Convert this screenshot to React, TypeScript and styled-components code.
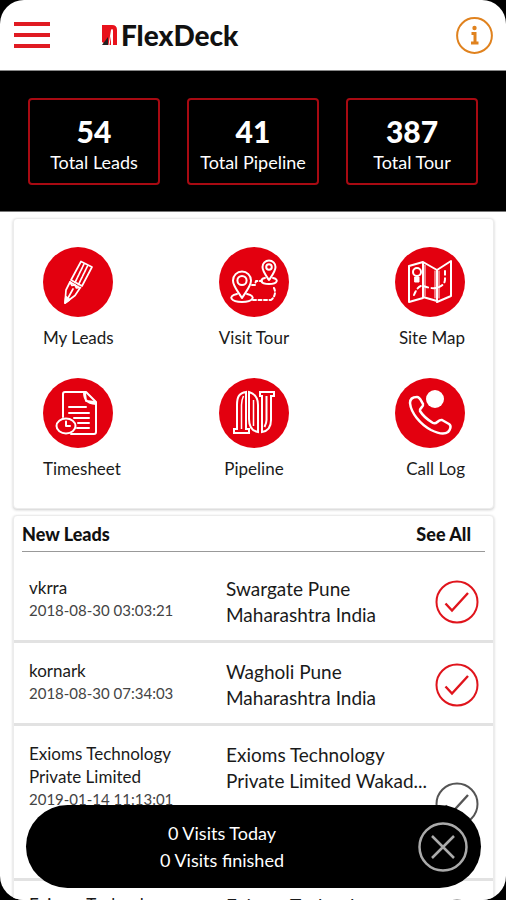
import React from "react";
import styled, { createGlobalStyle } from "styled-components";

const RED = "#e3000f";

const GlobalStyle = createGlobalStyle`
  * { box-sizing: border-box; }
  body {
    margin: 0;
    background: #000;
    color: #1a1a1a;
    font-family: Lato, "Liberation Sans", sans-serif;
    font-size: 18px;
  }
  button { font: inherit; color: inherit; background: none; border: 0; padding: 0; cursor: pointer; }
  h1, h2, p, ul, dl, dd { margin: 0; padding: 0; }
`;

const Screen = styled.div`
  position: relative;
  height: 100vh;
  overflow: hidden;
  background: #fff;
  border-radius: 24px;
`;

const Header = styled.header`
  display: flex;
  align-items: center;
  height: 71px;
  padding: 0 13px 0 14px;
  border-bottom: 1px solid #888;
`;

const MenuButton = styled.button`
  display: grid;
  gap: 7px;
  width: 36px;
`;

const MenuBar = styled.span`
  height: 4px;
  background: #e01b22;
`;

const Brand = styled.h1`
  display: flex;
  align-items: center;
  gap: 4px;
  flex: 1;
  margin-left: 52px;
  font-size: 28px;
  line-height: 32px;
  font-weight: 900;
  color: #111;
`;

const IconButton = styled.button`
  display: flex;
  flex: none;
`;

const Stats = styled.dl`
  display: grid;
  grid-template-columns: repeat(3, 1fr);
  gap: 27px;
  padding: 27px 28px 26px;
  background: #000;
  border-bottom: 1px solid #777;
`;

const Stat = styled.div`
  display: flex;
  flex-direction: column-reverse;
  justify-content: flex-start;
  align-items: center;
  height: 87px;
  padding: 12px 0 8px;
  border: 2px solid #a80a12;
  border-radius: 4px;
  color: #fff;
`;

const StatLabel = styled.dt`
  line-height: 26px;
  white-space: nowrap;
`;

const StatValue = styled.dd`
  font-size: 30px;
  line-height: 36px;
  font-weight: 900;
`;

const Card = styled.section`
  margin: 6px 12px 0 13px;
  background: #fff;
  border: 1px solid #ececec;
  border-radius: 4px;
  box-shadow: 0 1px 3px rgba(0, 0, 0, 0.2);
`;

const Tiles = styled.nav`
  display: grid;
  grid-template-columns: repeat(3, 1fr);
  row-gap: 28px;
  padding: 28px 28px 27px 29px;
`;

const Tile = styled.button<{ $side: "start" | "center" | "end" }>`
  display: flex;
  flex-direction: column;
  align-items: ${(p) => p.$side};
  gap: 9px;
  font-size: 17px;
  line-height: 24px;
`;

const Disc = styled.span`
  display: flex;
  align-items: center;
  justify-content: center;
  width: 70px;
  height: 70px;
  border-radius: 50%;
  background: ${RED};
`;

const ListHeader = styled.div`
  display: flex;
  justify-content: space-between;
  align-items: center;
  height: 36px;
  margin: 0 8px;
  padding-right: 14px;
  border-bottom: 1px solid #999;
  color: #111;
`;

const ListTitle = styled.h2`
  font-size: 18px;
  line-height: 24px;
  font-weight: 900;
`;

const SeeAll = styled.a`
  font-size: 18px;
  line-height: 24px;
  font-weight: 900;
  color: inherit;
  text-decoration: none;
`;

const LeadList = styled.ul`
  list-style: none;
`;

const Lead = styled.li<{ $tall?: boolean }>`
  display: grid;
  grid-template-columns: 180px minmax(0, 1fr) 44px;
  column-gap: 17px;
  min-height: ${(p) => (p.$tall ? 155 : 83)}px;
  padding: 16px 14px 12px 15px;
  border-bottom: 3px solid #e2e2e2;

  &:first-child { padding-top: 24px; min-height: 90px; }
  &:last-child { padding-top: 12px; }
`;

const LeadName = styled.p`
  width: 160px;
  font-size: 17px;
  line-height: 23px;
`;

const LeadDate = styled.time`
  display: block;
  font-size: 15px;
  line-height: 22px;
  color: #444;
`;

const LeadPlace = styled.p`
  font-size: 19px;
  line-height: 26px;
  white-space: nowrap;
`;

const CheckButton = styled.button`
  display: flex;
  align-self: center;
`;

const VisitsBar = styled.aside`
  position: absolute;
  left: 26px;
  right: 25px;
  bottom: 12px;
  display: flex;
  align-items: center;
  min-height: 83px;
  padding-right: 13px;
  border-radius: 42px;
  background: #000;
  color: #fff;
`;

const VisitsText = styled.p`
  flex: 1;
  line-height: 27px;
  text-align: center;
`;

const BrandMark = () => (
  <svg width="15" height="20" viewBox="0 0 15 20" aria-hidden="true">
    <path d="M0 0h10q5 0 5 5v15h-4V6q0-2-1-2T9 6v14H5L0 17z" fill="#e8121c" />
    <path d="M0 20l6-8v8z" fill="#222" />
    <path d="M7 20L9.500 5" stroke="#fff" strokeWidth="1" />
  </svg>
);

const InfoIcon = () => (
  <svg width="37" height="37" viewBox="0 0 37 37" fill="none" stroke="#e0821e" aria-hidden="true">
    <circle cx="18.500" cy="18.500" r="17.400" strokeWidth="2" />
    <circle cx="18.500" cy="11" r="2.200" fill="#e0821e" stroke="none" />
    <path d="M15.500 16.500h3.500v9M15 26h7.500" strokeWidth="3" />
  </svg>
);

const art = {
  width: 50,
  height: 50,
  viewBox: "0 0 50 50",
  fill: "none",
  stroke: "#fff",
  strokeWidth: 2,
  strokeLinejoin: "round" as const,
  strokeLinecap: "round" as const,
  "aria-hidden": true,
};

const PencilArt = () => (
  <svg {...art} strokeWidth={1.7}>
    <path d="M18 23L28 4.500l11 5.500L29 29z" />
    <path d="M31 7L22 25.500M34.500 9L25.500 27.500" strokeDasharray="3 1" />
    <path d="M17 25l-4 8-1 13 10-7.500 5-7.500z" />
    <path d="M17 25l2 3.500 3-.5 1.500 3 4-.5M20 32l-5 9M13 40l3.500 2.500" />
    <path d="M12 46l.8-6 3.500 3z" fill="#fff" />
  </svg>
);

const RouteArt = () => (
  <svg {...art}>
    <path d="M13 41C8 33 4 29 4 23.500a9 9 0 0 1 18 0C22 29 18 33 13 41z" />
    <circle cx="13" cy="23.500" r="4.600" />
    <path d="M8 37c-10 2-6 8 5 8s15-6 5-8" />
    <path d="M40 23c-4-6-6.500-9-6.500-13a6.500 6.500 0 0 1 13 0c0 4-2.500 7-6.500 13z" />
    <circle cx="40" cy="10" r="2.800" />
    <path d="M36 21c-6 1-5 6 4 6s10-5 4-6" />
    <path d="M23 28h3l1-4h6M24 43h17M45 31c2 4 1 9-3 12" strokeDasharray="3 2.500" />
  </svg>
);

const MapArt = () => (
  <svg {...art}>
    <path d="M4 9l14-4v36L4 45zM18 5l14 8v31l-14-4zM32 13l14-9v35l-14 6z" />
    <path d="M20 8v31M30 14v27M34 14v27" strokeWidth="1" />
    <path d="M10 20h4v5h-4z" fill="#fff" strokeWidth="1" />
    <circle cx="12" cy="15" r="4" strokeWidth="2" />
    <path d="M9 38c2-5 5-10 9-9s9 3 13 2 9-3 9-9V14" strokeDasharray="4 3.500" />
  </svg>
);

const SheetArt = () => (
  <svg {...art}>
    <path d="M10 29V6q0-2 2-2h21l10 10v30q0 2-2 2H18" />
    <path d="M31 4c0 7 2 11 12 12M32 5l1 8 9 1" />
    <path d="M16 19h17M16 25h20M21 30h15M25 35h11M24 40h12" />
    <ellipse cx="13" cy="38" rx="9.500" ry="7.500" />
    <path d="M13 33.500V38h4" />
  </svg>
);

const PipeArt = () => (
  <svg {...art} strokeLinecap="butt" strokeLinejoin="miter">
    <path d="M5 45v-4h3V17C8 9 10 5 17 4v37h3v4z" strokeWidth="2" />
    <path d="M12.500 41V17c0-4 1-7 2-9" strokeWidth="1.500" />
    <path d="M20 4c7 2 9 7 9 13v27c-6-1-9-6-9-13z" strokeWidth="2" />
    <path d="M24.500 12v26" strokeWidth="1.500" />
    <path d="M31 4h14v4h-3v24c0 7-3 11-9 12V8h-2zM37.500 8v24c0 3-1 5-2 7" strokeWidth="2" />
  </svg>
);

const PhoneArt = () => (
  <svg {...art} strokeWidth={2.5}>
    <path d="M5 15c0-4 3-6 7-6 3 0 4 4 6 7 1 3-4 4-3 7 3 5 8 9 13 12 4 2 5-4 9-3l7 4c3 2 1 6-1 8-4 3-11 1-17-2C15 36 6 25 5 15z" />
    <circle cx="30" cy="11" r="9" fill="#fff" stroke="none" />
  </svg>
);

const CheckIcon = ({ color }: { color: string }) => (
  <svg width="44" height="44" viewBox="0 0 44 44" fill="none" stroke={color} strokeWidth="2" aria-hidden="true">
    <circle cx="22" cy="22" r="20.500" />
    <path d="M10.500 23.500l6.500 7L33 13" strokeWidth="2.400" />
  </svg>
);

const CloseIcon = () => (
  <svg width="50" height="50" viewBox="0 0 50 50" fill="none" stroke="#aaa" strokeWidth="2.500" aria-hidden="true">
    <circle cx="25" cy="25" r="23.500" />
    <path d="M14 14l22 22M36 14L14 36" />
  </svg>
);

const stats = [
  { value: 54, label: "Total Leads" },
  { value: 41, label: "Total Pipeline" },
  { value: 387, label: "Total Tour" },
];

const tiles = [
  { label: "My Leads", Art: PencilArt },
  { label: "Visit Tour", Art: RouteArt },
  { label: "Site Map", Art: MapArt },
  { label: "Timesheet", Art: SheetArt },
  { label: "Pipeline", Art: PipeArt },
  { label: "Call Log", Art: PhoneArt },
];

const sides = ["start", "center", "end"] as const;

const leads = [
  { id: 1, name: "vkrra", date: "2018-08-30 03:03:21", place: ["Swargate Pune", "Maharashtra India"], done: true },
  { id: 2, name: "kornark", date: "2018-08-30 07:34:03", place: ["Wagholi Pune", "Maharashtra India"], done: true },
  {
    id: 3,
    name: "Exioms Technology Private Limited",
    date: "2019-01-14 11:13:01",
    place: ["Exioms Technology", "Private Limited Wakad..."],
    done: false,
    tall: true,
  },
  {
    id: 4,
    name: "Exioms Technology",
    date: "2019-01-14 11:13:01",
    place: ["Exioms Technology", "Private Limited Wakad..."],
    done: false,
  },
];

export default function App() {
  return (
    <>
      <GlobalStyle />
      <Screen>
        <Header>
          <MenuButton aria-label="Menu">
            <MenuBar />
            <MenuBar />
            <MenuBar />
          </MenuButton>
          <Brand>
            <BrandMark />
            FlexDeck
          </Brand>
          <IconButton aria-label="Information">
            <InfoIcon />
          </IconButton>
        </Header>
        <Stats>
          {stats.map((s) => (
            <Stat key={s.label}>
              <StatLabel>{s.label}</StatLabel>
              <StatValue>{s.value}</StatValue>
            </Stat>
          ))}
        </Stats>
        <Card>
          <Tiles>
            {tiles.map(({ label, Art }, i) => (
              <Tile key={label} $side={sides[i % 3]}>
                <Disc>
                  <Art />
                </Disc>
                {label}
              </Tile>
            ))}
          </Tiles>
        </Card>
        <Card>
          <ListHeader>
            <ListTitle>New Leads</ListTitle>
            <SeeAll href="#leads">See All</SeeAll>
          </ListHeader>
          <LeadList>
            {leads.map((lead) => (
              <Lead key={lead.id} $tall={lead.tall}>
                <div>
                  <LeadName>{lead.name}</LeadName>
                  <LeadDate>{lead.date}</LeadDate>
                </div>
                <LeadPlace>
                  {lead.place[0]}
                  <br />
                  {lead.place[1]}
                </LeadPlace>
                <CheckButton aria-label={`Mark ${lead.name} visited`}>
                  <CheckIcon color={lead.done ? "#e0141c" : "#555"} />
                </CheckButton>
              </Lead>
            ))}
          </LeadList>
        </Card>
        <VisitsBar>
          <VisitsText>
            0 Visits Today
            <br />0 Visits finished
          </VisitsText>
          <IconButton aria-label="Dismiss">
            <CloseIcon />
          </IconButton>
        </VisitsBar>
      </Screen>
    </>
  );
}
